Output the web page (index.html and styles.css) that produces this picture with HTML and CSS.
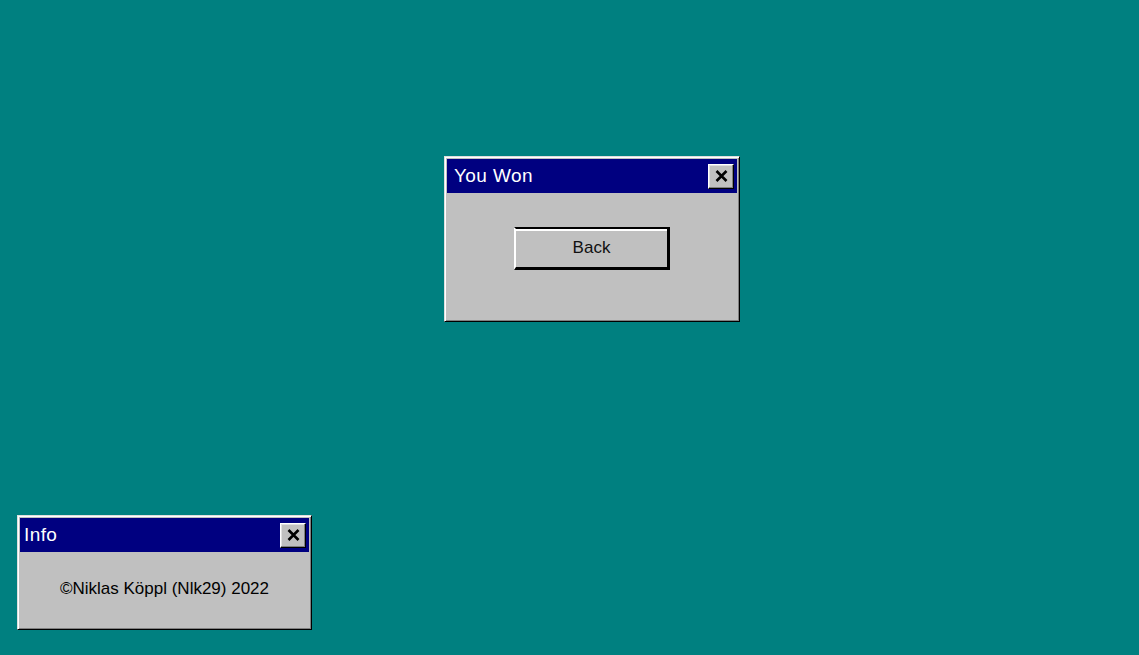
FILE: index.html
```html
<!DOCTYPE html>
<html lang="en">
<head>
  <meta charset="UTF-8">
  <meta name="viewport" content="width=device-width, initial-scale=1.0">
  <title>You Won</title>
  <link rel="stylesheet" href="styles.css">
</head>
<body>
  <div class="desktop">
    <div class="window win-result">
      <div class="titlebar">
        <span class="title">You Won</span>
        <button class="close-btn" aria-label="Close">
          <svg width="13" height="12" viewBox="0 0 13 12"><path d="M1.5 1 L11.5 11 M11.5 1 L1.5 11" stroke="#000" stroke-width="2.6" fill="none"/></svg>
        </button>
      </div>
      <div class="window-body result-body">
        <button class="btn">Back</button>
      </div>
    </div>

    <div class="window win-info">
      <div class="titlebar">
        <span class="title">Info</span>
        <button class="close-btn" aria-label="Close">
          <svg width="13" height="12" viewBox="0 0 13 12"><path d="M1.5 1 L11.5 11 M11.5 1 L1.5 11" stroke="#000" stroke-width="2.6" fill="none"/></svg>
        </button>
      </div>
      <div class="window-body info-body">
        <p class="info-text">©Niklas Köppl (Nlk29) 2022</p>
      </div>
    </div>
  </div>
</body>
</html>
```

FILE: styles.css
```css
html, body {
  margin: 0;
  padding: 0;
  height: 100%;
}
body {
  background-color: #008080;
  font-family: "Liberation Sans", Arial, sans-serif;
  overflow: hidden;
}
.desktop {
  position: relative;
  width: 100%;
  height: 100%;
}
.window {
  position: absolute;
  box-sizing: border-box;
  background-color: #c0c0c0;
  border: 1px solid;
  border-color: #dfdfdf #000 #000 #dfdfdf;
  box-shadow: inset 1px 1px #fff, inset -1px -1px #808080;
  padding: 2px;
  display: flex;
  flex-direction: column;
}
.win-result {
  left: 444px;
  top: 156px;
  width: 296px;
  height: 166px;
}
.win-info {
  left: 17px;
  top: 515px;
  width: 295px;
  height: 115px;
}
.titlebar {
  background-color: #000080;
  height: 34px;
  display: flex;
  align-items: center;
  justify-content: space-between;
  padding: 0 3px 0 7px;
}
.win-info .titlebar {
  padding-left: 4px;
}
.title {
  color: #fff;
  font-size: 19px;
  letter-spacing: 0.4px;
}
.close-btn {
  width: 26px;
  height: 25px;
  padding: 0;
  background-color: #c0c0c0;
  border: 1px solid;
  border-color: #fff #000 #000 #fff;
  box-shadow: inset -1px -1px #808080, inset 1px 1px #dfdfdf;
  display: flex;
  align-items: center;
  justify-content: center;
}
.window-body {
  flex: 1;
  display: flex;
  justify-content: center;
}
.result-body {
  align-items: flex-start;
  padding-top: 34px;
}
.info-body {
  align-items: center;
}
.btn {
  width: 156px;
  height: 43px;
  background-color: #c0c0c0;
  border: 2px solid;
  border-color: #000 #000 #000 #fff;
  border-bottom-width: 3px;
  border-right-width: 3px;
  box-shadow: inset 0 2px #fff;
  font-family: "Liberation Sans", Arial, sans-serif;
  font-size: 17px;
  color: #111;
  padding: 0;
}
.info-text {
  margin: 0;
  font-size: 17px;
  color: #000;
  letter-spacing: 0;
  padding-bottom: 2px;
}
```
